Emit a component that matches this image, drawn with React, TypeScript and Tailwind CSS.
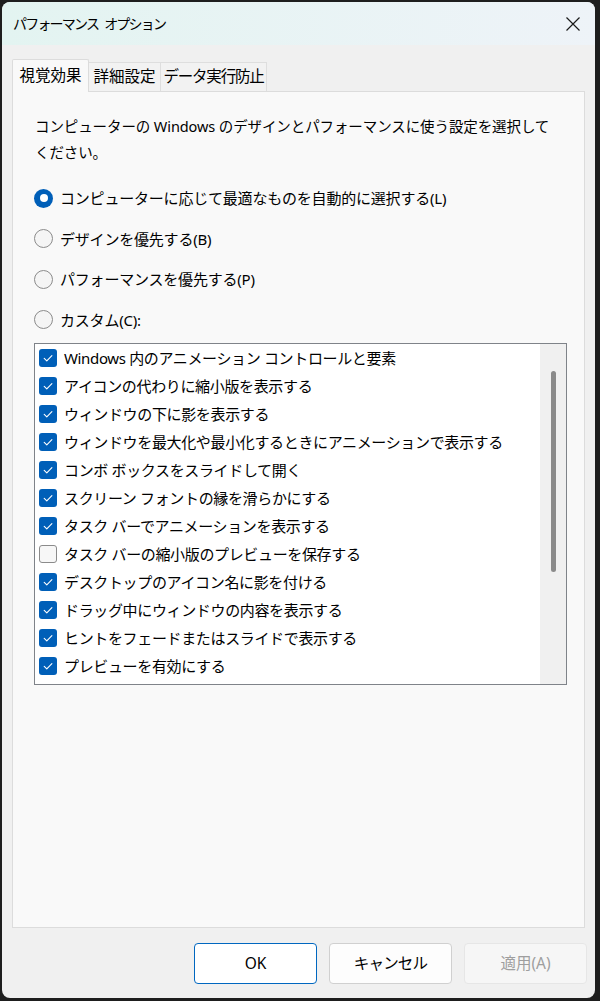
import React from "react";

const FONT = "font-['Noto_Sans','Noto_Sans_CJK_JP',sans-serif]";

// radio options shown above the list
const radios = [
  { label: "コンピューターに応じて最適なものを自動的に選択する(L)", selected: true },
  { label: "デザインを優先する(B)", selected: false },
  { label: "パフォーマンスを優先する(P)", selected: false },
  { label: "カスタム(C):", selected: false },
];

// visual effect toggles
const effects = [
  { label: "Windows 内のアニメーション コントロールと要素", checked: true },
  { label: "アイコンの代わりに縮小版を表示する", checked: true },
  { label: "ウィンドウの下に影を表示する", checked: true },
  { label: "ウィンドウを最大化や最小化するときにアニメーションで表示する", checked: true },
  { label: "コンボ ボックスをスライドして開く", checked: true },
  { label: "スクリーン フォントの縁を滑らかにする", checked: true },
  { label: "タスク バーでアニメーションを表示する", checked: true },
  { label: "タスク バーの縮小版のプレビューを保存する", checked: false },
  { label: "デスクトップのアイコン名に影を付ける", checked: true },
  { label: "ドラッグ中にウィンドウの内容を表示する", checked: true },
  { label: "ヒントをフェードまたはスライドで表示する", checked: true },
  { label: "プレビューを有効にする", checked: true },
];

function Radio({ selected }: { selected: boolean }) {
  if (selected) {
    return (
      <span className="flex h-[19px] w-[19px] shrink-0 items-center justify-center rounded-full bg-[#005fb8]">
        <span className="h-[8px] w-[8px] rounded-full bg-white" />
      </span>
    );
  }
  return <span className="h-[19px] w-[19px] shrink-0 rounded-full border border-[#8b8b8b] bg-[#f5f5f5]" />;
}

function Check({ checked }: { checked: boolean }) {
  if (!checked) {
    return <span className="h-[18px] w-[18px] shrink-0 rounded-[3px] border border-[#8b8b8b] bg-[#f7f7f7]" />;
  }
  return (
    <span className="flex h-[18px] w-[18px] shrink-0 items-center justify-center rounded-[3px] bg-[#005fb8]">
      <svg width="18" height="18" viewBox="0 0 18 18" fill="none">
        <path d="M5.2 9.3 L7.8 11.9 L12.9 6.6" stroke="white" strokeWidth="1.1" strokeLinecap="round" strokeLinejoin="round" />
      </svg>
    </span>
  );
}

export default function App() {
  return (
    <div className={`min-h-[1001px] bg-[#1e1e1e] pl-[2px] pt-[2px] ${FONT}`}>
      <div className="flex h-[996px] w-[593px] flex-col overflow-hidden rounded-lg bg-[#f0f0f0]">
        {/* title bar */}
        <div className="flex h-[43px] shrink-0 items-center justify-between bg-gradient-to-r from-[#e3f4f1] to-[#eef3f8] pl-[11px] pr-[14px]">
          <span className="flex gap-[6px] text-[14px] tracking-[-1.8px] text-black">
            <span>パフォーマンス</span>
            <span>オプション</span>
          </span>
          <svg width="16" height="16" viewBox="0 0 16 16">
            <path d="M1.5 1.5 L14.5 14.5 M14.5 1.5 L1.5 14.5" stroke="#1a1a1a" strokeWidth="1.2" />
          </svg>
        </div>

        <div className="flex flex-1 flex-col px-[10px] pt-[14px] pb-[14px]">
          {/* tabs */}
          <div className="flex h-[32px] items-end">
            <div className="relative z-10 -mb-px flex h-[33px] w-[77px] items-center justify-center rounded-t-[2px] border border-b-0 border-[#dcdcdc] bg-[#f9f9f9] text-[15.5px] text-black">
              視覚効果
            </div>
            <div className="flex h-[29px] w-[72px] items-center justify-center border border-b-0 border-l-0 border-[#dedede] bg-[#f2f2f2] text-[15.5px] text-black">
              詳細設定
            </div>
            <div className="flex h-[29px] w-[106px] items-center justify-center border border-b-0 border-l-0 border-[#dedede] bg-[#f2f2f2] text-[15.5px] tracking-[-1.2px] text-black">
              データ実行防止
            </div>
          </div>

          {/* panel */}
          <div className="flex flex-1 flex-col border border-[#dcdcdc] bg-[#f9f9f9] pl-[21px] pt-[21px]">
            <p className="pl-px text-[14.5px] leading-[26px] tracking-[-0.1px] whitespace-nowrap text-black">
              コンピューターの Windows のデザインとパフォーマンスに使う設定を選択して
              <br />
              ください。
            </p>

            <div className="mt-[13px] flex flex-col">
              {radios.map((r) => (
                <div key={r.label} className="flex h-[40.5px] items-center gap-[7px] text-[15px] tracking-[-0.2px] text-black">
                  <Radio selected={r.selected} />
                  <span>{r.label}</span>
                </div>
              ))}
            </div>

            {/* effects list */}
            <div className="mt-[3px] flex h-[342px] w-[533px] border border-[#7f8389] bg-white">
              <div className="flex flex-1 flex-col overflow-hidden pl-[4px]">
                {effects.map((e) => (
                  <div key={e.label} className="flex h-[28px] shrink-0 items-center gap-[7px] text-[15px] tracking-[-0.35px] text-black">
                    <Check checked={e.checked} />
                    <span className="whitespace-nowrap">{e.label}</span>
                  </div>
                ))}
              </div>
              <div className="flex w-[26px] shrink-0 justify-center bg-[#f0f0f0] pt-[27px]">
                <div className="h-[201px] w-[5px] rounded-full bg-[#8a8a8a]" />
              </div>
            </div>
          </div>

          {/* buttons */}
          <div className="-mr-[2px] mt-[15px] flex justify-end gap-[12px]">
            <button className="h-[41px] w-[123px] rounded-[4px] border border-[#0067c0] bg-white text-[15.5px] text-black">
              OK
            </button>
            <button className="h-[41px] w-[123px] rounded-[4px] border border-[#d0d0d0] bg-[#fdfdfd] text-[15.5px] tracking-[-0.8px] text-black">
              キャンセル
            </button>
            <button className="h-[41px] w-[123px] rounded-[4px] border border-[#e6e6e6] bg-[#f6f6f6] text-[15.5px] text-[#9e9e9e]">
              適用(A)
            </button>
          </div>
        </div>
      </div>
    </div>
  );
}
